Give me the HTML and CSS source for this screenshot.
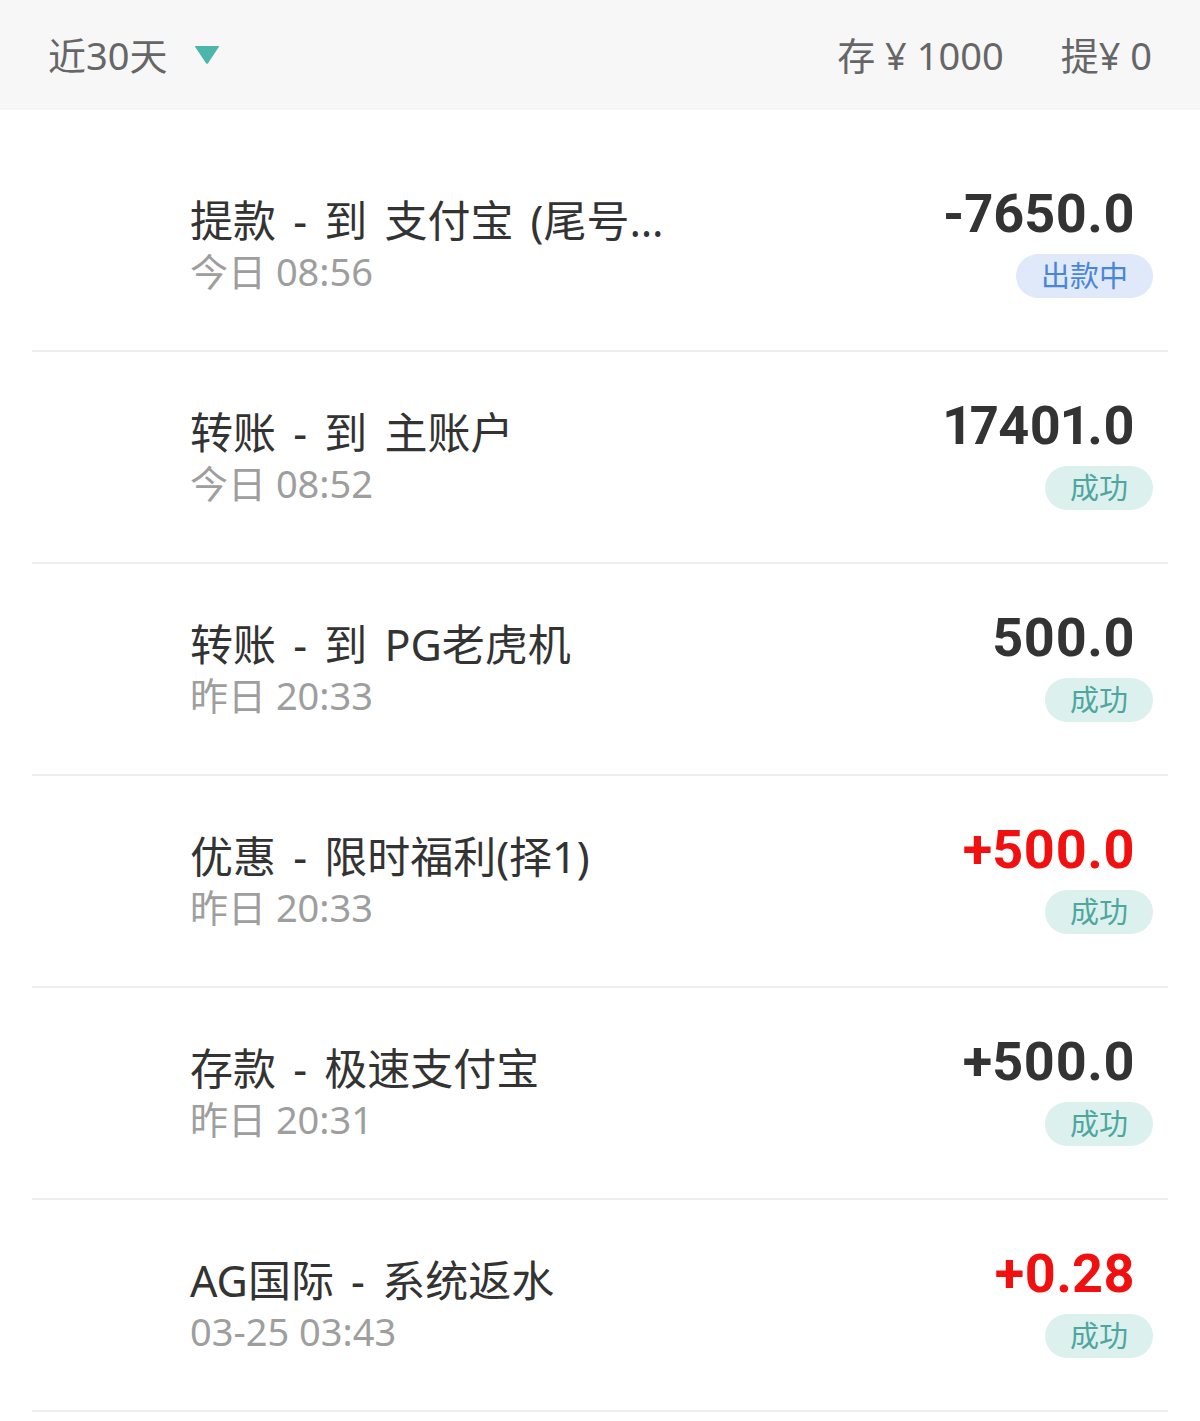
FILE: index.html
```html
<!DOCTYPE html>
<html lang="zh-CN">
<head>
<meta charset="utf-8">
<title>资金记录</title>
<link rel="stylesheet" href="styles.css">
</head>
<body>
<header class="topbar">
  <div class="range">
    <span class="range-label">近30天</span>
    <svg class="caret" width="26" height="20" viewBox="0 0 26 20"><path d="M1.5 1 H24.5 Q25.5 1 24.8 2 L14 18.2 Q13 19.5 12 18.2 L1.2 2 Q0.5 1 1.5 1 Z" fill="#4db6ac"/></svg>
  </div>
  <div class="totals">
    <span class="total">存 ¥ 1000</span>
    <span class="total">提¥ 0</span>
  </div>
</header>
<main class="list">
  <div class="row">
    <div class="info">
      <div class="title">提款 - 到 支付宝 (尾号…</div>
      <div class="time">今日 08:56</div>
    </div>
    <div class="side">
      <div class="amount">-7650.0</div>
      <span class="badge badge-pending">出款中</span>
    </div>
  </div>
  <div class="row">
    <div class="info">
      <div class="title">转账 - 到 主账户</div>
      <div class="time">今日 08:52</div>
    </div>
    <div class="side">
      <div class="amount">17401.0</div>
      <span class="badge badge-ok">成功</span>
    </div>
  </div>
  <div class="row">
    <div class="info">
      <div class="title">转账 - 到 PG老虎机</div>
      <div class="time">昨日 20:33</div>
    </div>
    <div class="side">
      <div class="amount">500.0</div>
      <span class="badge badge-ok">成功</span>
    </div>
  </div>
  <div class="row">
    <div class="info">
      <div class="title">优惠 - 限时福利(择1)</div>
      <div class="time">昨日 20:33</div>
    </div>
    <div class="side">
      <div class="amount amount-red">+500.0</div>
      <span class="badge badge-ok">成功</span>
    </div>
  </div>
  <div class="row">
    <div class="info">
      <div class="title">存款 - 极速支付宝</div>
      <div class="time">昨日 20:31</div>
    </div>
    <div class="side">
      <div class="amount">+500.0</div>
      <span class="badge badge-ok">成功</span>
    </div>
  </div>
  <div class="row">
    <div class="info">
      <div class="title">AG国际 - 系统返水</div>
      <div class="time">03-25 03:43</div>
    </div>
    <div class="side">
      <div class="amount amount-red">+0.28</div>
      <span class="badge badge-ok">成功</span>
    </div>
  </div>
</main>
</body>
</html>
```
FILE: styles.css
```css
* { box-sizing: border-box; }
html, body { margin: 0; padding: 0; }
body {
  background: #ffffff;
  font-family: "Noto Sans", "Noto Sans CJK SC", sans-serif;
  color: #333333;
}
.topbar {
  height: 110px;
  background: #f7f7f7;
  display: flex;
  align-items: center;
  justify-content: space-between;
  padding: 0 48px 0 48px;
}
.range {
  display: flex;
  align-items: center;
  gap: 27px;
}
.range-label, .total {
  font-size: 38px;
  color: #666666;
  line-height: 44px;
}
.caret { display: block; margin-top: 0; }
.totals {
  display: flex;
  gap: 57px;
}
.list {
  padding: 30px 32px 0 32px;
}
.row {
  height: 212px;
  border-bottom: 2px solid #eeeeee;
  display: flex;
  align-items: center;
  justify-content: space-between;
  padding: 0 15px 0 158px;
}
.info {
  display: flex;
  flex-direction: column;
}
.title {
  font-size: 43px;
  line-height: 52px;
  color: #333333;
  white-space: nowrap;
  word-spacing: 6px;
}
.time {
  font-size: 38px;
  line-height: 48px;
  color: #9e9e9e;
}
.side {
  display: flex;
  flex-direction: column;
  align-items: flex-end;
  gap: 12px;
  margin-top: -6px;
}
.amount {
  font-family: Roboto, "Noto Sans", sans-serif;
  font-weight: 700;
  font-size: 54px;
  line-height: 56px;
  color: #333333;
  padding-right: 18px;
  font-feature-settings: "pnum" 1;
  font-variant-numeric: proportional-nums;
}
.amount-red { color: #f01010; }
.badge {
  display: inline-block;
  height: 44px;
  line-height: 44px;
  padding: 0 25px;
  border-radius: 22px;
  font-size: 29px;
}
.badge-pending {
  background: #dfe9f9;
  color: #4a86d8;
}
.badge-ok {
  background: #dcf0ee;
  color: #4ea79e;
}
```
